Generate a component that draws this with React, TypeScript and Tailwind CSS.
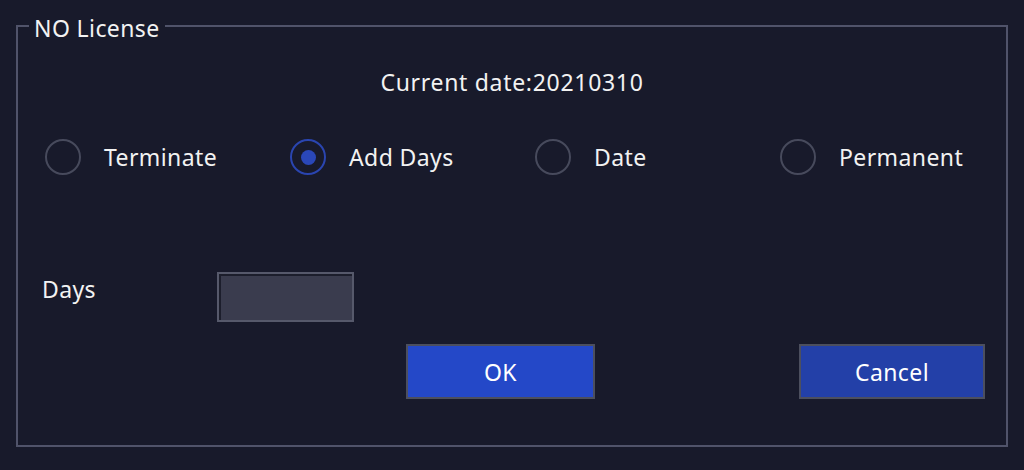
import React from "react";

const font = { fontFamily: '"Noto Sans", "Open Sans", sans-serif' };

function Radio({ checked }: { checked?: boolean }) {
  if (checked) {
    return (
      <div className="w-[36px] h-[36px] rounded-full border-2 border-[#2a45b0] flex items-center justify-center shrink-0">
        <div className="w-[15px] h-[15px] rounded-full bg-[#2a47b8]" />
      </div>
    );
  }
  return <div className="w-[36px] h-[36px] rounded-full border-2 border-[#474a5c] shrink-0" />;
}

export default function App() {
  const options = [
    { label: "Terminate", checked: false },
    { label: "Add Days", checked: true },
    { label: "Date", checked: false },
    { label: "Permanent", checked: false },
  ];
  return (
    <div className="w-[1024px] h-[470px] bg-[#181a2b] pt-[25px] px-[16px] text-[#f2f2f2] tracking-[0.4px]" style={font}>
      <div className="relative h-[422px] border-2 border-[#50536a]">
        <span className="absolute left-[11px] top-[-13px] px-[5px] bg-[#181a2b] text-[23px] leading-[28px]">
          NO License
        </span>
        <div className="mt-[41px] text-center text-[23px] leading-[28px] tracking-[0.7px]">Current date:20210310</div>
        <div className="mt-[43px] pl-[27px] grid grid-cols-[245px_245px_245px_245px]">
          {options.map((o) => (
            <div key={o.label} className="flex items-center gap-[23px] h-[36px]">
              <Radio checked={o.checked} />
              <span className="text-[23px] leading-[28px]">{o.label}</span>
            </div>
          ))}
        </div>
        <div className="mt-[97px] pl-[24px] flex items-start">
          <span className="mt-[3px] w-[175px] text-[23px] leading-[28px]">Days</span>
          <div className="w-[137px] h-[50px] bg-[#3a3c4e] border-2 border-[#56596b] shadow-[inset_2px_2px_0_#1c1e2c]" />
        </div>
        <div className="mt-[22px] pl-[388px] flex">
          <button className="w-[189px] h-[55px] bg-[#2448c8] border-2 border-[#4c4f5e] text-[23px] leading-[28px] text-white">
            OK
          </button>
          <button className="ml-[204px] w-[186px] h-[55px] bg-[#2340a8] border-2 border-[#4c4f5e] text-[23px] leading-[28px] text-white">
            Cancel
          </button>
        </div>
      </div>
    </div>
  );
}
